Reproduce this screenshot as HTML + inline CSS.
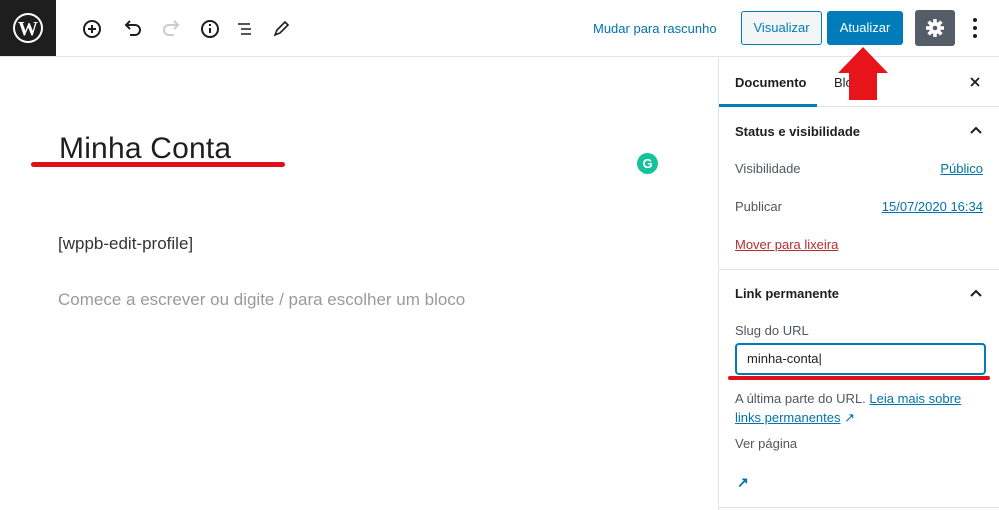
<!DOCTYPE html>
<html><head><meta charset="utf-8"><style>
*{box-sizing:border-box;margin:0;padding:0}
body{width:999px;height:510px;overflow:hidden;background:#fff;font-family:"Liberation Sans",sans-serif;position:relative;color:#1e1e1e}
.abs{position:absolute}
.hdr{left:0;top:0;width:999px;height:57px;border-bottom:1px solid #e2e4e7}
.logo{left:0;top:0;width:56px;height:56px;background:#1e1e1e}
.side{left:718px;top:57px;width:281px;height:453px;border-left:1px solid #e2e4e7}
.lnk{color:#0073aa;text-decoration:underline}
.t13{font-size:13px}
.gray{color:#50575e}
</style></head><body>
<div class="abs hdr"></div>
<div class="abs logo"><svg width="56" height="56" viewBox="0 0 56 56"><circle cx="28" cy="28" r="15" fill="#fff"/><circle cx="28" cy="28" r="13" fill="#1e1e1e"/><text x="28" y="35" fill="#fff" font-family="Liberation Serif" font-weight="bold" font-size="20" text-anchor="middle">W</text></svg></div>
<svg class="abs" style="left:80px;top:17px" width="220" height="24" viewBox="0 0 220 24" fill="none" stroke="#1e1e1e" stroke-width="2">
<circle cx="12" cy="12" r="8"/><path d="M12 8v8M8 12h8"/>
<path d="M47 8h8a5 5 0 010 10h-5" /><path d="M50 4l-4 4 4 4" fill="none"/>
<g stroke="#ccc"><path d="M97 8h-8a5 5 0 000 10h5"/><path d="M94 4l4 4-4 4"/></g>
<circle cx="130" cy="12" r="8"/><path d="M130 11v5M130 7v2"/>
<path d="M158 7h4M161 12h10M161 17h10M158 7h12" stroke-width="1.6"/>
<path d="M195 18l2-5 8-8 3 3-8 8-5 2z" stroke-width="1.6"/>
</svg>
<div class="abs t13" style="left:593px;top:21px;color:#0073aa">Mudar para rascunho</div>
<div class="abs t13" style="left:741px;top:11px;width:81px;height:34px;border:1px solid #007cba;border-radius:3px;color:#007cba;text-align:center;line-height:32px;background:#f3f5f6">Visualizar</div>
<div class="abs t13" style="left:827px;top:11px;width:76px;height:34px;background:#007cba;border-radius:3px;color:#fff;text-align:center;line-height:34px">Atualizar</div>
<div class="abs" style="left:915px;top:10px;width:40px;height:36px;background:#555d66;border-radius:3px"><svg width="40" height="36"><g stroke="#fff" stroke-width="3.5"><path d="M20 9v18M11 18h18M13.6 11.6l12.8 12.8M26.4 11.6l-12.8 12.8"/></g><circle cx="20" cy="18" r="6" fill="#fff"/><circle cx="20" cy="18" r="2.3" fill="#555d66"/></svg></div>
<div class="abs" style="left:972px;top:17px"><svg width="6" height="22"><circle cx="3" cy="3" r="2" fill="#1e1e1e"/><circle cx="3" cy="11" r="2" fill="#1e1e1e"/><circle cx="3" cy="19" r="2" fill="#1e1e1e"/></svg></div>

<div class="abs side">
<div style="height:50px;border-bottom:1px solid #e2e4e7;position:relative">
<div class="abs t13" style="left:16px;top:18px;font-weight:bold;color:#1e1e1e">Documento</div>
<div class="abs" style="left:0;top:47px;width:98px;height:3px;background:#007cba"></div>
<div class="abs t13" style="left:115px;top:18px">Bloco</div>
<svg class="abs" style="left:251px;top:20px" width="10" height="10"><path d="M1 1l8 8M9 1l-8 8" stroke="#1e1e1e" stroke-width="1.8"/></svg>
</div>
<div style="position:relative;height:163px;border-bottom:1px solid #e2e4e7">
<div class="abs t13" style="left:16px;top:17px;font-weight:bold">Status e visibilidade</div>
<svg class="abs" style="left:251px;top:19px" width="12" height="8"><path d="M1 7l5-5 5 5" fill="none" stroke="#1e1e1e" stroke-width="2"/></svg>
<div class="abs t13 gray" style="left:16px;top:54px">Visibilidade</div>
<div class="abs t13 lnk" style="right:16px;top:54px">Público</div>
<div class="abs t13 gray" style="left:16px;top:92px">Publicar</div>
<div class="abs t13 lnk" style="right:16px;top:92px">15/07/2020 16:34</div>
<div class="abs t13" style="left:16px;top:130px;color:#b32d2e;text-decoration:underline">Mover para lixeira</div>
</div>
<div style="position:relative;height:238px;border-bottom:1px solid #e2e4e7">
<div class="abs t13" style="left:16px;top:16px;font-weight:bold">Link permanente</div>
<svg class="abs" style="left:251px;top:19px" width="12" height="8"><path d="M1 7l5-5 5 5" fill="none" stroke="#1e1e1e" stroke-width="2"/></svg>
<div class="abs t13 gray" style="left:16px;top:53px">Slug do URL</div>
<div class="abs t13" style="left:16px;top:73px;width:251px;height:32px;border:2px solid #007cba;border-radius:4px;padding:6px 10px">minha-conta|</div>
<div class="abs" style="left:9px;top:106px;width:262px;height:4px;background:#e0101a;border-radius:2px"></div>
<div class="abs t13 gray" style="left:16px;top:119px;line-height:19px;width:250px">A última parte do URL. <span class="lnk">Leia mais sobre links permanentes</span> <span style="color:#0073aa">↗</span></div>
<div class="abs t13 gray" style="left:16px;top:166px">Ver página</div>
<div class="abs" style="left:18px;top:204px;color:#0073aa;font-size:14px;font-weight:bold">↗</div>
</div>
</div>

<div class="abs" style="left:59px;top:132px;font-size:30px;color:#1e1e1e;letter-spacing:0.2px">Minha Conta</div>
<div class="abs" style="left:31px;top:162px;width:254px;height:5px;background:#e0101a;border-radius:3px"></div>
<div class="abs" style="left:637px;top:153px;width:21px;height:21px;border-radius:50%;background:#15c39a;color:#fff;font-size:13px;font-weight:bold;text-align:center;line-height:21px">G</div>
<div class="abs" style="left:58px;top:234px;font-size:17px;color:#333">[wppb-edit-profile]</div>
<div class="abs" style="left:58px;top:290px;font-size:17px;color:#9a9a9a">Comece a escrever ou digite / para escolher um bloco</div>

<svg class="abs" style="left:836px;top:45px" width="54" height="56"><polygon points="27,2 52,28 41,28 41,55 13,55 13,28 2,28" fill="#e8141c"/></svg>
</body></html>
